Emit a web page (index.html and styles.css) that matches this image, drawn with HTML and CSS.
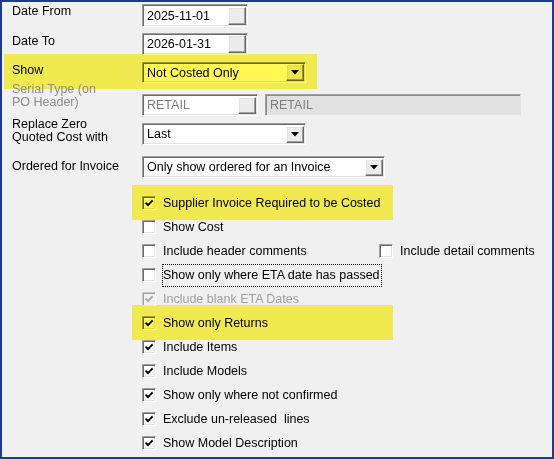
FILE: index.html
```html
<!DOCTYPE html>
<html>
<head>
<meta charset="utf-8">
<link rel="stylesheet" href="styles.css">
</head>
<body>
<div class="frame">
  <div class="row r1">
    <div class="lbl">Date From</div>
    <div class="field w-date"><span class="val">2025-11-01</span><span class="btn"></span></div>
  </div>
  <div class="row r2">
    <div class="lbl">Date To</div>
    <div class="field w-date"><span class="val">2026-01-31</span><span class="btn"></span></div>
  </div>
  <div class="row r3 hl">
    <div class="lbl">Show</div>
    <div class="field combo w-show"><span class="val">Not Costed Only</span><span class="btn"><svg width="8" height="5" viewBox="0 0 8 5"><polygon points="0,0 8,0 4,4.5" fill="#000"/></svg></span></div>
  </div>
  <div class="row r4">
    <div class="lbl dim">Serial Type (on<br>PO Header)</div>
    <div class="field w-serial"><span class="val gray">RETAIL</span><span class="btn"></span></div>
    <div class="field w-serial2 readonly"><span class="val gray">RETAIL</span></div>
  </div>
  <div class="row r5">
    <div class="lbl">Replace Zero<br>Quoted Cost with</div>
    <div class="field combo w-last"><span class="val">Last</span><span class="btn"><svg width="8" height="5" viewBox="0 0 8 5"><polygon points="0,0 8,0 4,4.5" fill="#000"/></svg></span></div>
  </div>
  <div class="row r6">
    <div class="lbl">Ordered for Invoice</div>
    <div class="field combo w-order"><span class="val">Only show ordered for an Invoice</span><span class="btn"><svg width="8" height="5" viewBox="0 0 8 5"><polygon points="0,0 8,0 4,4.5" fill="#000"/></svg></span></div>
  </div>

  <div class="checks">
    <div class="ck hl">
      <span class="cb"><svg width="10" height="10" viewBox="0 0 10 10"><path d="M1.5 4.6 L4 7.1 L8.6 2.4" fill="none" stroke="#000" stroke-width="2"/></svg></span>
      <span class="txt">Supplier Invoice Required to be Costed</span>
    </div>
    <div class="ck">
      <span class="cb"></span>
      <span class="txt">Show Cost</span>
    </div>
    <div class="ck">
      <div class="grp first"><span class="cb"></span><span class="txt">Include header comments</span></div>
      <div class="grp"><span class="cb"></span><span class="txt">Include detail comments</span></div>
    </div>
    <div class="ck">
      <span class="cb"></span>
      <span class="txt focus">Show only where ETA date has passed</span>
    </div>
    <div class="ck">
      <span class="cb dis"><svg width="10" height="10" viewBox="0 0 10 10"><path d="M1.5 4.6 L4 7.1 L8.6 2.4" fill="none" stroke="#a8a8a8" stroke-width="2"/></svg></span>
      <span class="txt disabled">Include blank ETA Dates</span>
    </div>
    <div class="ck hl">
      <span class="cb"><svg width="10" height="10" viewBox="0 0 10 10"><path d="M1.5 4.6 L4 7.1 L8.6 2.4" fill="none" stroke="#000" stroke-width="2"/></svg></span>
      <span class="txt">Show only Returns</span>
    </div>
    <div class="ck">
      <span class="cb"><svg width="10" height="10" viewBox="0 0 10 10"><path d="M1.5 4.6 L4 7.1 L8.6 2.4" fill="none" stroke="#000" stroke-width="2"/></svg></span>
      <span class="txt">Include Items</span>
    </div>
    <div class="ck">
      <span class="cb"><svg width="10" height="10" viewBox="0 0 10 10"><path d="M1.5 4.6 L4 7.1 L8.6 2.4" fill="none" stroke="#000" stroke-width="2"/></svg></span>
      <span class="txt">Include Models</span>
    </div>
    <div class="ck">
      <span class="cb"><svg width="10" height="10" viewBox="0 0 10 10"><path d="M1.5 4.6 L4 7.1 L8.6 2.4" fill="none" stroke="#000" stroke-width="2"/></svg></span>
      <span class="txt">Show only where not confirmed</span>
    </div>
    <div class="ck">
      <span class="cb"><svg width="10" height="10" viewBox="0 0 10 10"><path d="M1.5 4.6 L4 7.1 L8.6 2.4" fill="none" stroke="#000" stroke-width="2"/></svg></span>
      <span class="txt">Exclude un-released&nbsp; lines</span>
    </div>
    <div class="ck">
      <span class="cb"><svg width="10" height="10" viewBox="0 0 10 10"><path d="M1.5 4.6 L4 7.1 L8.6 2.4" fill="none" stroke="#000" stroke-width="2"/></svg></span>
      <span class="txt">Show Model Description</span>
    </div>
  </div>
</div>
</body>
</html>
```

FILE: styles.css
```css
html, body {
  margin: 0;
  padding: 0;
  background: #f0f0f0;
}

.frame {
  width: 554px;
  height: 459px;
  box-sizing: border-box;
  border: 2px solid #1f3a8a;
  background: #f0f0f0;
  font-family: "Liberation Sans", Arial, sans-serif;
  font-size: 12.5px;
  color: #000;
  overflow: hidden;
}

.row {
  display: flex;
  align-items: flex-start;
}

.lbl {
  flex: none;
  width: 140px;
  box-sizing: border-box;
  padding-left: 10px;
  line-height: 13px;
  white-space: nowrap;
}

.lbl.dim {
  color: #8d8d8d;
}

.r1 { height: 29px; }
.r1 .lbl { margin-top: 3px; }
.r1 .field { margin-top: 2px; height: 23px; }

.r2 { height: 23px; }
.r2 .lbl { margin-top: 4px; }
.r2 .field { margin-top: 2px; }

.r3 { height: 35px; margin-left: 2px; width: 313px; }
.r3 .lbl { width: 138px; padding-left: 8px; margin-top: 10px; }
.r3 .field { margin-top: 8px; height: 21px; }

.r4 { height: 29px; }
.r4 .lbl { margin-top: -6px; position: relative; }
.r4 .field { margin-top: 5px; }

.r5 { height: 32px; }
.r5 .lbl { margin-top: 0; }
.r5 .field { margin-top: 5px; }

.r6 { height: 35px; }
.r6 .lbl { margin-top: 10px; }
.r6 .field { margin-top: 6px; }

/* sunken field */
.field {
  flex: none;
  display: flex;
  align-items: center;
  height: 22px;
  box-sizing: border-box;
  border: 1px solid;
  border-color: #a0a0a0 #ffffff #ffffff #a0a0a0;
  box-shadow: inset 1px 1px 0 #696969, inset -1px -1px 0 #e3e3e3;
  background: #ffffff;
}

.val {
  flex: 1;
  padding-left: 4px;
  white-space: nowrap;
  overflow: hidden;
}

.val.gray {
  color: #7d7d7d;
}

.btn {
  flex: none;
  width: 18px;
  height: 17px;
  margin-right: 1px;
  box-sizing: border-box;
  border: 1px solid;
  border-color: #ffffff #696969 #696969 #ffffff;
  box-shadow: inset -1px -1px 0 #a0a0a0, inset 1px 1px 0 #e3e3e3;
  background: #ececec;
  display: flex;
  align-items: center;
  justify-content: center;
}

.btn svg {
  display: block;
}

.w-date { width: 106px; }
.w-date .btn { height: 18px; }
.w-show { width: 164px; }
.w-serial { width: 116px; }
.w-serial2 { width: 256px; margin-left: 7px; }
.w-last { width: 164px; }
.w-order { width: 243px; }

.readonly {
  background: #e1e1e1;
  border-color: #a0a0a0 #e1e1e1 #f0f0f0 #a0a0a0;
  box-shadow: inset 1px 1px 0 #8a8a8a;
}

/* highlighter overlay */
.hl {
  position: relative;
}

.hl::after {
  content: "";
  position: absolute;
  inset: 0;
  background: #fff855;
  mix-blend-mode: multiply;
  pointer-events: none;
}

/* checkbox section */
.checks {
  padding: 6px 0 0 130px;
}

.ck {
  display: flex;
  align-items: center;
  height: 24px;
  padding-left: 10px;
}

.ck.hl {
  width: 251px;
  margin: -6px 0 -5px;
  padding-top: 6px;
  padding-bottom: 5px;
}

.grp {
  display: flex;
  align-items: center;
}

.grp.first {
  width: 237px;
}

.cb {
  flex: none;
  width: 14px;
  height: 14px;
  box-sizing: border-box;
  border: 1px solid;
  border-color: #a0a0a0 #ffffff #ffffff #a0a0a0;
  box-shadow: inset 1px 1px 0 #696969, inset -1px -1px 0 #e3e3e3;
  background: #ffffff;
  display: flex;
  align-items: center;
  justify-content: center;
}

.cb svg {
  display: block;
}

.cb.dis {
  background: #f0f0f0;
  border-color: #c8c8c8 #ffffff #ffffff #c8c8c8;
  box-shadow: inset 1px 1px 0 #a0a0a0;
}

.txt {
  margin-left: 6px;
  border: 1px solid transparent;
  padding-right: 1px;
  line-height: 21px;
  white-space: nowrap;
}

.txt.focus {
  border: 1px dotted #000;
}

.txt.disabled {
  color: #a0a0a0;
}
```
